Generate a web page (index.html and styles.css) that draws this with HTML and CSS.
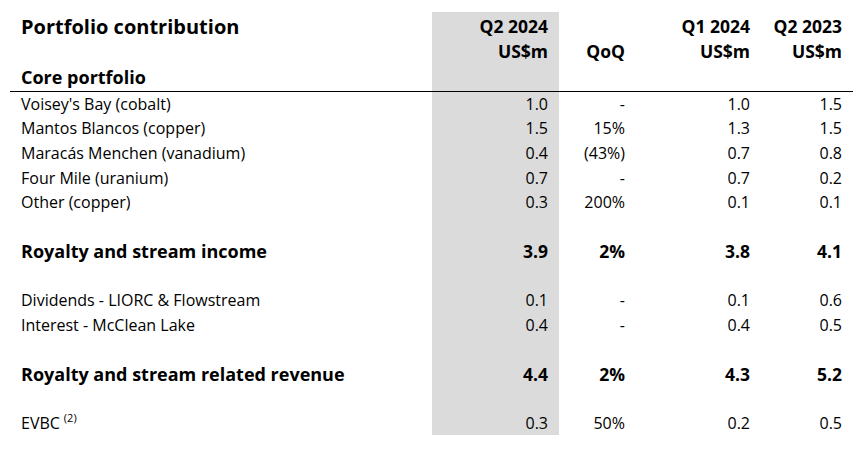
FILE: index.html
```html
<!DOCTYPE html>
<html lang="en">
<head>
<meta charset="utf-8">
<title>Portfolio contribution</title>
<link rel="stylesheet" href="styles.css">
</head>
<body>
<table class="pc">
  <colgroup>
    <col class="c-label">
    <col class="c-cur">
    <col class="c-qoq">
    <col class="c-q1">
    <col class="c-q2">
  </colgroup>
  <thead>
    <tr>
      <th class="label"><span class="title">Portfolio contribution</span><br><br><span class="section">Core portfolio</span></th>
      <th class="cur">Q2 2024<br>US$m</th>
      <th class="num"><br>QoQ</th>
      <th class="num">Q1 2024<br>US$m</th>
      <th class="num">Q2 2023<br>US$m</th>
    </tr>
  </thead>
  <tbody>
    <tr><td class="label">Voisey's Bay (cobalt)</td><td class="cur">1.0</td><td class="num">-</td><td class="num">1.0</td><td class="num">1.5</td></tr>
    <tr><td class="label">Mantos Blancos (copper)</td><td class="cur">1.5</td><td class="num">15%</td><td class="num">1.3</td><td class="num">1.5</td></tr>
    <tr><td class="label">Maracás Menchen (vanadium)</td><td class="cur">0.4</td><td class="num">(43%)</td><td class="num">0.7</td><td class="num">0.8</td></tr>
    <tr><td class="label">Four Mile (uranium)</td><td class="cur">0.7</td><td class="num">-</td><td class="num">0.7</td><td class="num">0.2</td></tr>
    <tr><td class="label">Other (copper)</td><td class="cur">0.3</td><td class="num">200%</td><td class="num">0.1</td><td class="num">0.1</td></tr>
    <tr class="gap"><td class="label"></td><td class="cur"></td><td></td><td></td><td></td></tr>
    <tr class="total"><td class="label">Royalty and stream income</td><td class="cur">3.9</td><td class="num">2%</td><td class="num">3.8</td><td class="num">4.1</td></tr>
    <tr class="gap"><td class="label"></td><td class="cur"></td><td></td><td></td><td></td></tr>
    <tr><td class="label">Dividends - LIORC &amp; Flowstream</td><td class="cur">0.1</td><td class="num">-</td><td class="num">0.1</td><td class="num">0.6</td></tr>
    <tr><td class="label">Interest - McClean Lake</td><td class="cur">0.4</td><td class="num">-</td><td class="num">0.4</td><td class="num">0.5</td></tr>
    <tr class="gap"><td class="label"></td><td class="cur"></td><td></td><td></td><td></td></tr>
    <tr class="total"><td class="label">Royalty and stream related revenue</td><td class="cur">4.4</td><td class="num">2%</td><td class="num">4.3</td><td class="num">5.2</td></tr>
    <tr class="gap"><td class="label"></td><td class="cur"></td><td></td><td></td><td></td></tr>
    <tr><td class="label">EVBC<sup class="note">(2)</sup></td><td class="cur">0.3</td><td class="num">50%</td><td class="num">0.2</td><td class="num">0.5</td></tr>
  </tbody>
</table>
</body>
</html>
```

FILE: styles.css
```css
html, body {
  margin: 0;
  padding: 0;
  background: #ffffff;
}

body {
  font-family: "Open Sans", "Liberation Sans", sans-serif;
  font-size: 16px;
  color: #000000;
  padding: 12px 0 0 10px;
}

.pc {
  border-collapse: collapse;
  table-layout: fixed;
  width: 843px;
}

.c-label { width: 422px; }
.c-cur { width: 127px; }
.c-qoq { width: 77px; }
.c-q1 { width: 125px; }
.c-q2 { width: 92px; }

.pc th {
  font-size: 17.5px;
  font-weight: 700;
  line-height: 25.2px;
  padding: 2px 0 0 0;
  vertical-align: top;
  border-bottom: 1px solid #000000;
  white-space: nowrap;
}

.pc th.label {
  text-align: left;
  padding-left: 11px;
}

.pc th.cur,
.pc th.num {
  text-align: right;
  padding-right: 11px;
}

.pc th.cur {
  background: #dbdbdb;
}

.title {
  font-size: 20px;
}

.section {
  font-size: 18px;
}

.pc td {
  height: 24.57px;
  line-height: 24px;
  padding: 0;
  white-space: nowrap;
}

.pc td.label {
  text-align: left;
  padding-left: 11px;
}

.pc td.cur,
.pc td.num {
  text-align: right;
  padding-right: 11px;
}

.pc td.cur {
  background: #dbdbdb;
}

.pc tr.total td {
  font-weight: 700;
  font-size: 17.5px;
}

.pc tr.total td.label {
  font-size: 18px;
}

.note {
  font-size: 11px;
  vertical-align: top;
  line-height: 14px;
  margin-left: 4px;
}
```
